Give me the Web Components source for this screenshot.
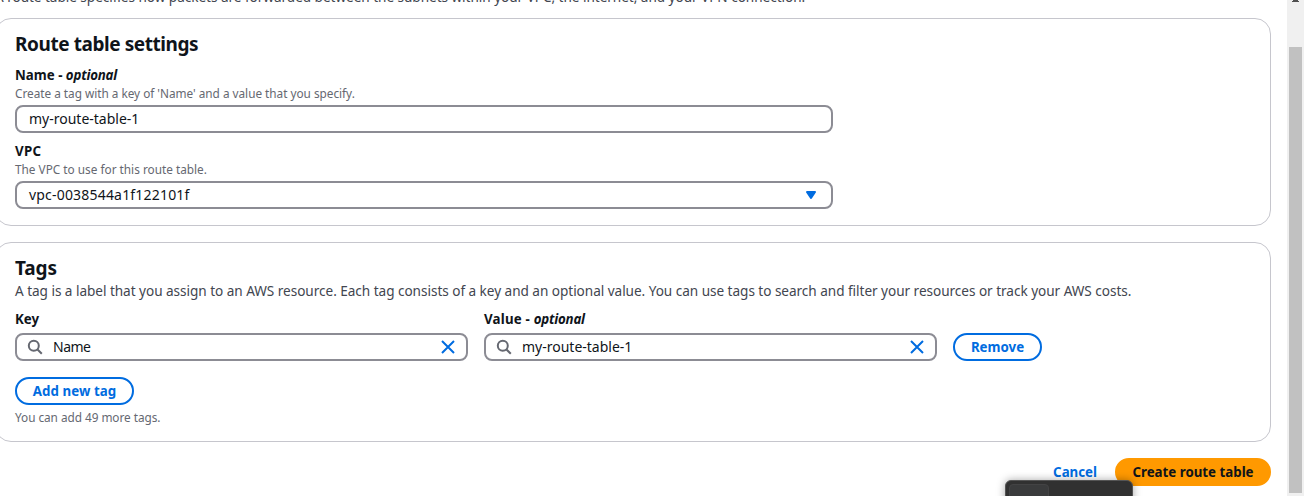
<!DOCTYPE html>
<html lang="en">
<head>
<meta charset="utf-8">
<title>Create route table</title>
<style>
body{margin:0;overflow:hidden;background:#fff;font:14px/20px "Noto Sans","Open Sans",sans-serif;color:#0f141a}
</style>
</head>
<body>
<route-page></route-page>

<script>
const define = (name, html) => {
  const tpl = document.createElement('template');
  tpl.innerHTML = html;
  customElements.define(name, class extends HTMLElement {
    constructor() {
      super();
      this.attachShadow({mode: 'open'}).append(tpl.content.cloneNode(true));
    }
  });
};

define('ui-card', `
<style>
:host{display:block;box-sizing:border-box;border:1px solid #c6c6cd;border-radius:16px;padding:13px 19px 16px;background:#fff}
h2{margin:0;font-size:19px;line-height:24px;font-weight:700;letter-spacing:var(--title-ls,-.43px)}
</style>
<h2><slot name="title"></slot></h2><slot></slot>`);

define('ui-field', `
<style>
:host{display:block}
.label{font-size:13.3px;font-weight:700;line-height:20px;white-space:nowrap}
.hint{display:block;font-size:11.8px;line-height:16px;color:#656871;white-space:nowrap}
.control{margin-top:4px}
::slotted(i){letter-spacing:-.2px}
</style>
<div class="label"><slot name="label"></slot><slot name="optional"></slot></div>
<div class="hint"><slot name="hint"></slot></div>
<div class="control"><slot></slot></div>`);

define('ui-box', `
<style>
:host{display:flex;align-items:center;box-sizing:border-box;height:28px;border:2px solid #8c8c94;border-radius:8px;padding:0 12px;background:#fff;white-space:nowrap}
.text{flex:1}
</style>
<slot name="start"></slot><span class="text"><slot></slot></span><slot name="end"></slot>`);

define('icon-search', `
<style>:host{display:block;width:16px;height:16px;margin:0 10px 0 -2px}svg{display:block}</style>
<svg width="16" height="16" viewBox="0 0 16 16" fill="none" stroke="#656871" stroke-width="2"><circle cx="6.8" cy="6.8" r="5"/><path d="m10.5 10.5 4.3 4.3"/></svg>`);

define('icon-close', `
<style>:host{display:block;width:16px;height:16px;margin-right:-2px}svg{display:block}</style>
<svg width="16" height="16" viewBox="0 0 16 16" fill="none" stroke="#006ce0" stroke-width="2"><path d="m2 2 12 12M14 2 2 14"/></svg>`);

define('icon-caret', `
<style>:host{display:block;width:16px;height:16px}svg{display:block}</style>
<svg width="16" height="16" viewBox="0 0 16 16"><path d="M4 5h8l-4 6z" fill="#006ce0" stroke="#006ce0" stroke-width="2" stroke-linejoin="round"/></svg>`);

define('ui-button', `
<style>
:host{display:flex;align-items:center;justify-content:center;box-sizing:border-box;height:28px;border:2px solid #006ce0;border-radius:20px;color:#006ce0;font-size:13.3px;font-weight:700;white-space:nowrap}
:host([kind=link]){border-color:transparent}
:host([kind=primary]){border-color:#ff9900;background:#ff9900;color:#0f141a}
</style>
<slot></slot>`);

define('page-scrollbar', `
<style>
:host{display:flex;flex-direction:column;align-items:center;width:17px;height:496px;background:#f0f0f0;flex:none}
svg{display:block;flex:none}
.thumb{width:13px;height:446px;margin-top:45px;background:#c1c1c1}
</style>
<svg width="17" height="2"><path d="M6 0h5v1h1v1H5V1h1z" fill="#505050"/></svg>
<div class="thumb"></div>`);

define('dock-popup', `
<style>
:host{display:block;position:absolute;left:1005px;top:480px;box-sizing:border-box;width:128px;height:40px;border:1px solid #555;border-radius:6px;background:#313131;box-shadow:0 0 8px rgba(0,0,0,.35);padding:3px}
div{box-sizing:border-box;width:40px;height:32px;border:1px solid #434344;border-radius:4px;background:#3a3b3c}
</style>
<div></div>`);

define('route-page', `
<style>
:host{display:flex;justify-content:space-between;position:relative;height:496px;overflow:hidden}
main{width:1276px;margin:-13px 0 0 -5px}
.intro{margin:0 0 11px;font-size:13.6px;color:#424650;letter-spacing:-.04px;white-space:nowrap}
.settings{height:208px;margin-bottom:16px}
.settings ui-field{width:818px;margin-top:9px}
.settings ui-field + ui-field{margin-top:8px}
.tags{height:200px;--title-ls:-.15px}
.desc{margin:1px 0 8px;font-size:13.6px;color:#424650;letter-spacing:-.04px;white-space:nowrap}
.row{display:flex;align-items:flex-end;gap:16px;margin-bottom:16px}
.row ui-field{width:453px}
.note{font-size:11.8px;line-height:16px;margin-top:4px;color:#656871;letter-spacing:-.04px}
.actions{display:flex;justify-content:flex-end;align-items:center;gap:18px;margin-top:16px}
</style>
<main>
  <p class="intro">A route table specifies how packets are forwarded between the subnets within your VPC, the internet, and your VPN connection.</p>
  <ui-card class="settings"><span slot="title">Route table settings</span>
    <ui-field><span slot="label">Name - </span><i slot="optional">optional</i><span slot="hint" style="letter-spacing:-.02px">Create a tag with a key of 'Name' and a value that you specify.</span>
      <ui-box>my-route-table-1</ui-box></ui-field>
    <ui-field><span slot="label" style="letter-spacing:.3px">VPC</span><span slot="hint">The VPC to use for this route table.</span>
      <ui-box><span style="letter-spacing:.19px">vpc-0038544a1f122101f</span><icon-caret slot="end"></icon-caret></ui-box></ui-field>
  </ui-card>
  <ui-card class="tags"><span slot="title">Tags</span>
    <p class="desc">A tag is a label that you assign to an AWS resource. Each tag consists of a key and an optional value. You can use tags to search and filter your resources or track your AWS costs.</p>
    <div class="row">
      <ui-field><span slot="label">Key</span>
        <ui-box><icon-search slot="start"></icon-search><span style="letter-spacing:-.5px">Name</span><icon-close slot="end"></icon-close></ui-box></ui-field>
      <ui-field><span slot="label" style="letter-spacing:.2px">Value - </span><i slot="optional">optional</i>
        <ui-box><icon-search slot="start"></icon-search>my-route-table-1<icon-close slot="end"></icon-close></ui-box></ui-field>
      <ui-button style="width:89px">Remove</ui-button>
    </div>
    <ui-button style="width:119px;letter-spacing:.07px">Add new tag</ui-button>
    <div class="note">You can add 49 more tags.</div>
  </ui-card>
  <div class="actions">
    <ui-button kind="link" style="border-width:0">Cancel</ui-button>
    <ui-button kind="primary" style="width:156px">Create route table</ui-button>
  </div>
</main>
<page-scrollbar></page-scrollbar>
<dock-popup></dock-popup>`);
</script>
</body>
</html>
